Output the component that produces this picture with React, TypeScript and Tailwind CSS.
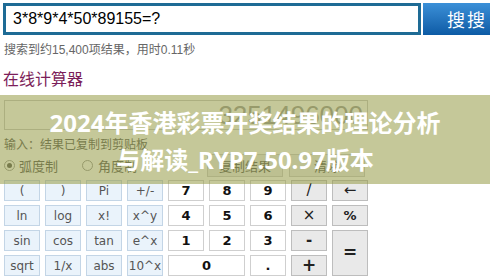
import React from "react";

const fn = "bg-[#eaf3fb] border border-[#c3d5e6] text-[#555] text-[12px] font-['DejaVu_Sans',sans-serif]";
const num = "bg-white border border-[#cfcfcf] text-[#111] text-[13px] font-bold font-['DejaVu_Sans',sans-serif]";
const op = "bg-[#e9e9e9] border border-[#bdbdbd] text-[#222] text-[15px] font-['DejaVu_Sans',sans-serif]";

function Key({ label, cls, span }: { label: string; cls: string; span?: string }) {
  return (
    <div className={`flex items-center justify-center ${cls} ${span ?? ""}`}>{label}</div>
  );
}

export default function App() {
  return (
    <div className="relative w-[490px] h-[280px] overflow-hidden bg-white font-['Liberation_Sans','Noto_Sans_CJK_SC',sans-serif]">
      {/* search bar */}
      <div className="flex pt-[3px] pl-[3px]">
        <div className="w-[418px] h-[32px] border-[3px] border-[#1e6b95] flex items-center pl-[7px] text-[16px] text-black">
          3*8*9*4*50*89155=?
        </div>
        <div className="ml-[2px] flex-1 h-[32px] bg-gradient-to-b from-[#3b90d8] to-[#0c5ba5] text-white text-[18px] flex items-center pl-[24px] tracking-[2px] font-['Noto_Sans_CJK_SC',sans-serif]">
          搜搜
        </div>
      </div>

      <p className="mt-[7px] pl-[4px] text-[12px] leading-[16px] text-[#666] font-['Liberation_Sans','Noto_Sans_CJK_SC',sans-serif]">
        搜索到约15,400项结果，用时0.11秒
      </p>

      <p className="mt-[10px] pl-[3px] text-[16px] leading-[20px] text-[#7c1e5a] font-['Noto_Sans_CJK_SC',sans-serif]">
        在线计算器
      </p>

      {/* calculator */}
      <div className="pl-[4px] mt-[12px]">
        <div className="w-[364px] h-[30px] border border-[#c8c8c8] text-right pr-[4px] text-[26px] leading-[28px] text-[#999]">
          3251496000
        </div>
        <p className="mt-[6px] text-[12px] leading-[16px] text-[#555] font-['Noto_Sans_CJK_SC',sans-serif]">
          输入：结果已复制到剪贴板
        </p>
        <div className="mt-[2px] h-[23px] flex items-center text-[13px] text-[#555] font-['Noto_Sans_CJK_SC',sans-serif]">
          <span className="w-[11px] h-[11px] rounded-full border border-[#999] flex items-center justify-center">
            <span className="w-[5px] h-[5px] rounded-full bg-[#555]" />
          </span>
          <span className="ml-[4px]">弧度制</span>
          <span className="ml-[24px] w-[11px] h-[11px] rounded-full border border-[#999]" />
          <span className="ml-[5px]">角度制</span>
          <span className="ml-[70px] w-[76px] h-[23px] bg-[#eee] border border-[#ccc] flex items-center justify-center">复制结果</span>
          <span className="ml-[6px] w-[76px] h-[23px] bg-[#eee] border border-[#ccc] flex items-center justify-center">清除</span>
        </div>

        <div className="mt-[3px] grid grid-cols-[repeat(9,36px)] auto-rows-[21px] gap-x-[5px] gap-y-[4px]">
          <Key label="(" cls={fn} />
          <Key label=")" cls={fn} />
          <Key label="Pi" cls={fn} />
          <Key label="+/-" cls={fn} />
          <Key label="7" cls={num} />
          <Key label="8" cls={num} />
          <Key label="9" cls={num} />
          <Key label="/" cls={op} />
          <Key label="←" cls={op} />

          <Key label="ln" cls={fn} />
          <Key label="log" cls={fn} />
          <Key label="x!" cls={fn} />
          <Key label="x^y" cls={fn} />
          <Key label="4" cls={num} />
          <Key label="5" cls={num} />
          <Key label="6" cls={num} />
          <Key label="×" cls={op} />
          <Key label="%" cls={`${op} font-bold !text-[13px]`} />

          <Key label="sin" cls={fn} />
          <Key label="cos" cls={fn} />
          <Key label="tan" cls={fn} />
          <Key label="e^x" cls={fn} />
          <Key label="1" cls={num} />
          <Key label="2" cls={num} />
          <Key label="3" cls={num} />
          <Key label="-" cls={`${op} font-bold`} />
          <Key label="=" cls={`${op} font-bold !text-[17px]`} span="row-span-2" />

          <Key label="sqrt" cls={fn} />
          <Key label="1/x" cls={fn} />
          <Key label="abs" cls={fn} />
          <Key label="10^x" cls={fn} />
          <Key label="0" cls={num} span="col-span-2" />
          <Key label="." cls={num} />
          <Key label="+" cls={`${op} font-bold !text-[17px]`} />
        </div>
      </div>

      {/* title overlay */}
      <div className="absolute left-0 top-[95px] w-full h-[89px] bg-[rgba(150,155,70,0.55)] flex flex-col items-center justify-center pt-[3px] text-white font-bold text-[24px] leading-[37px] font-['Noto_Sans','Noto_Sans_CJK_SC',sans-serif]">
        <div>2024年香港彩票开奖结果的理论分析</div>
        <div>与解读_RYP7.50.97版本</div>
      </div>
    </div>
  );
}
